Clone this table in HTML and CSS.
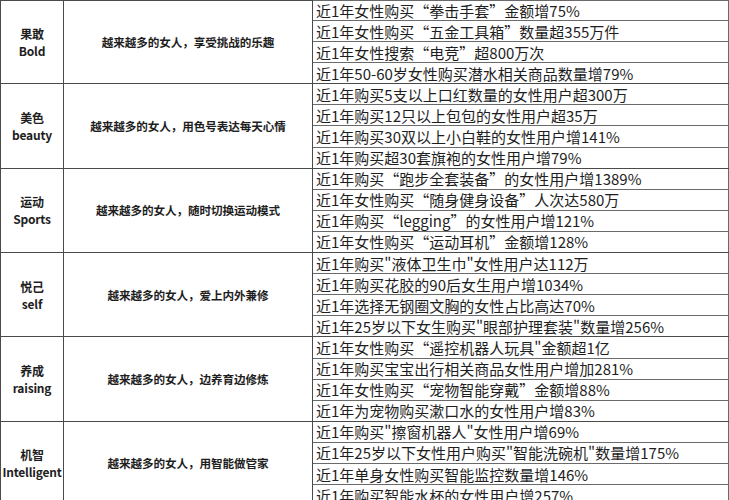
FILE: index.html
```html
<!DOCTYPE html>
<html lang="zh-CN">
<head>
<meta charset="utf-8">
<title>女性消费趋势</title>
<link rel="stylesheet" href="styles.css">
</head>
<body>
<table class="trend">
  <colgroup><col class="c-cat"><col class="c-desc"><col class="c-data"></colgroup>
  <tbody>
    <tr class="first"><td class="cat" rowspan="4">果敢<br>Bold</td><td class="desc" rowspan="4">越来越多的女人，享受挑战的乐趣</td><td class="data">近1年女性购买“拳击手套”金额增75%</td></tr>
    <tr><td class="data">近1年女性购买“五金工具箱”数量超355万件</td></tr>
    <tr><td class="data">近1年女性搜索“电竞”超800万次</td></tr>
    <tr class="last"><td class="data">近1年50-60岁女性购买潜水相关商品数量增79%</td></tr>

    <tr><td class="cat" rowspan="4">美色<br>beauty</td><td class="desc" rowspan="4">越来越多的女人，用色号表达每天心情</td><td class="data">近1年购买5支以上口红数量的女性用户超300万</td></tr>
    <tr><td class="data">近1年购买12只以上包包的女性用户超35万</td></tr>
    <tr><td class="data">近1年购买30双以上小白鞋的女性用户增141%</td></tr>
    <tr class="last"><td class="data">近1年购买超30套旗袍的女性用户增79%</td></tr>

    <tr><td class="cat" rowspan="4">运动<br>Sports</td><td class="desc" rowspan="4">越来越多的女人，随时切换运动模式</td><td class="data">近1年购买“跑步全套装备”的女性用户增1389%</td></tr>
    <tr><td class="data">近1年女性购买“随身健身设备”人次达580万</td></tr>
    <tr><td class="data">近1年购买“legging”的女性用户增121%</td></tr>
    <tr class="last"><td class="data">近1年女性购买“运动耳机”金额增128%</td></tr>

    <tr><td class="cat" rowspan="4">悦己<br>self</td><td class="desc" rowspan="4">越来越多的女人，爱上内外兼修</td><td class="data">近1年购买"液体卫生巾"女性用户达112万</td></tr>
    <tr><td class="data">近1年购买花胶的90后女生用户增1034%</td></tr>
    <tr><td class="data">近1年选择无钢圈文胸的女性占比高达70%</td></tr>
    <tr class="last"><td class="data">近1年25岁以下女生购买"眼部护理套装"数量增256%</td></tr>

    <tr><td class="cat" rowspan="4">养成<br>raising</td><td class="desc" rowspan="4">越来越多的女人，边养育边修炼</td><td class="data">近1年女性购买“遥控机器人玩具"金额超1亿</td></tr>
    <tr><td class="data">近1年购买宝宝出行相关商品女性用户增加281%</td></tr>
    <tr><td class="data">近1年女性购买“宠物智能穿戴”金额增88%</td></tr>
    <tr class="last"><td class="data">近1年为宠物购买漱口水的女性用户增83%</td></tr>

    <tr><td class="cat" rowspan="4">机智<br>Intelligent</td><td class="desc" rowspan="4">越来越多的女人，用智能做管家</td><td class="data">近1年购买"擦窗机器人"女性用户增69%</td></tr>
    <tr><td class="data">近1年25岁以下女性用户购买"智能洗碗机"数量增175%</td></tr>
    <tr><td class="data">近1年单身女性购买智能监控数量增146%</td></tr>
    <tr class="last"><td class="data">近1年购买智能水杯的女性用户增257%</td></tr>
  </tbody>
</table>
</body>
</html>
```

FILE: styles.css
```css
html, body {
  margin: 0;
  padding: 0;
  background: #ffffff;
}

body {
  width: 729px;
  height: 500px;
  overflow: hidden;
  font-family: "Noto Sans CJK SC", "Noto Sans", sans-serif;
  color: #1e1e1e;
}

.trend {
  border-collapse: collapse;
  table-layout: fixed;
  width: 728px;
}

.c-cat { width: 63px; }
.c-desc { width: 249px; }
.c-data { width: 416px; }

.trend td {
  border: 1px solid #4a4a4a;
  padding: 0;
  overflow: hidden;
  white-space: nowrap;
}

.trend tr {
  height: 21.1px;
}

.trend tr.first {
  height: 18px;
}

.cat {
  text-align: center;
  vertical-align: middle;
  font-size: 12px;
  font-weight: 700;
  line-height: 17px;
  overflow: visible;
  letter-spacing: -0.2px;
}

.desc {
  text-align: center;
  vertical-align: middle;
  font-size: 11.6px;
  font-weight: 700;
  letter-spacing: -0.1px;
}

.data {
  font-size: 15px;
  line-height: 19px;
  padding-left: 3px !important;
  vertical-align: middle;
  border-color: #6a6a6a !important;
  border-left-color: #4a4a4a !important;
}

.trend tr.last .data {
  border-bottom-color: #4a4a4a !important;
}
```
